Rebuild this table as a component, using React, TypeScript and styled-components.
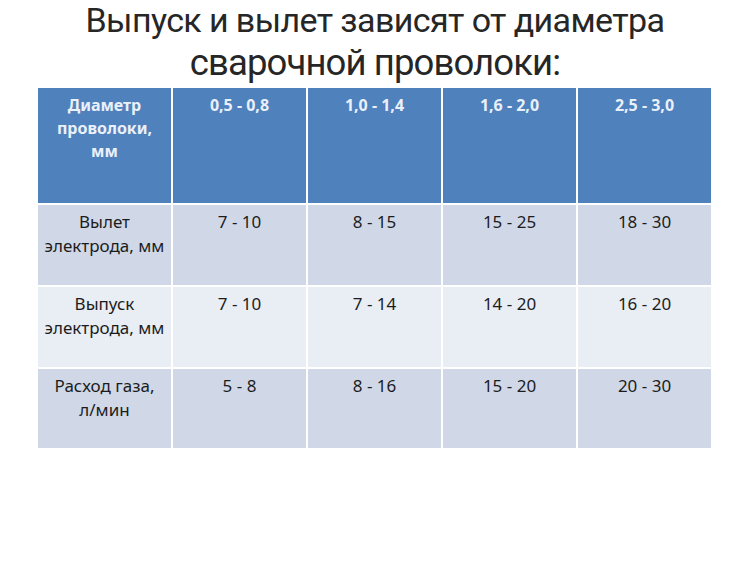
import React from "react";
import styled, { createGlobalStyle } from "styled-components";

const Global = createGlobalStyle`
  html, body { margin: 0; padding: 0; background: #ffffff; }
  body { font-family: "Noto Sans", "Open Sans", sans-serif; }
`;

const Page = styled.div`
  width: 750px;
  height: 563px;
  background: #ffffff;
  display: flex;
  flex-direction: column;
  align-items: stretch;
`;

const Title = styled.h1`
  margin: 0;
  height: 88px;
  box-sizing: border-box;
  font-family: "Roboto", sans-serif;
  font-weight: 400;
  color: #262626;
  text-align: center;
`;

const TitleLine = styled.span<{ $size: number; $lh: number; $ls: number }>`
  display: block;
  font-size: ${(p) => p.$size}px;
  line-height: ${(p) => p.$lh}px;
  letter-spacing: ${(p) => p.$ls}px;
`;

const Table = styled.div`
  margin-left: 38px;
  width: 673px;
  display: grid;
  grid-template-columns: repeat(5, 133px);
  grid-template-rows: 115px 80px 80px 79px;
  gap: 2px;
  background: #ffffff;
`;

const Cell = styled.div<{ $kind: "head" | "odd" | "even" }>`
  background: ${(p) =>
    p.$kind === "head" ? "#4f81bd" : p.$kind === "odd" ? "#d0d8e8" : "#e9edf4"};
  color: ${(p) => (p.$kind === "head" ? "#eaf0f9" : "#1c1c1c")};
  font-family: "Noto Sans", sans-serif;
  font-weight: ${(p) => (p.$kind === "head" ? 700 : 400)};
  font-size: ${(p) => (p.$kind === "head" ? "16px" : "17px")};
  line-height: ${(p) => (p.$kind === "head" ? "23px" : "24px")};
  text-align: center;
  padding-top: ${(p) => (p.$kind === "head" ? "6px" : "5px")};
  box-sizing: border-box;
`;

const header = ["Диаметр\nпроволоки,\nмм", "0,5 - 0,8", "1,0 - 1,4", "1,6 - 2,0", "2,5 - 3,0"];
const rows: string[][] = [
  ["Вылет\nэлектрода, мм", "7 - 10", "8 - 15", "15 - 25", "18 - 30"],
  ["Выпуск\nэлектрода, мм", "7 - 10", "7 - 14", "14 - 20", "16 - 20"],
  ["Расход газа,\nл/мин", "5 - 8", "8 - 16", "15 - 20", "20 - 30"],
];

const Lines: React.FC<{ text: string }> = ({ text }) => (
  <>
    {text.split("\n").map((l, i) => (
      <div key={i}>{l}</div>
    ))}
  </>
);

export default function App() {
  return (
    <Page>
      <Global />
      <Title>
        <TitleLine $size={34} $lh={41} $ls={-0.6}>
          Выпуск и вылет зависят от диаметра
        </TitleLine>
        <TitleLine $size={36.5} $lh={43} $ls={-0.9}>
          сварочной проволоки:
        </TitleLine>
      </Title>
      <Table>
        {header.map((h, i) => (
          <Cell key={"h" + i} $kind="head">
            <Lines text={h} />
          </Cell>
        ))}
        {rows.map((r, ri) =>
          r.map((c, ci) => (
            <Cell key={ri + "-" + ci} $kind={ri % 2 === 0 ? "odd" : "even"}>
              <Lines text={c} />
            </Cell>
          ))
        )}
      </Table>
    </Page>
  );
}
